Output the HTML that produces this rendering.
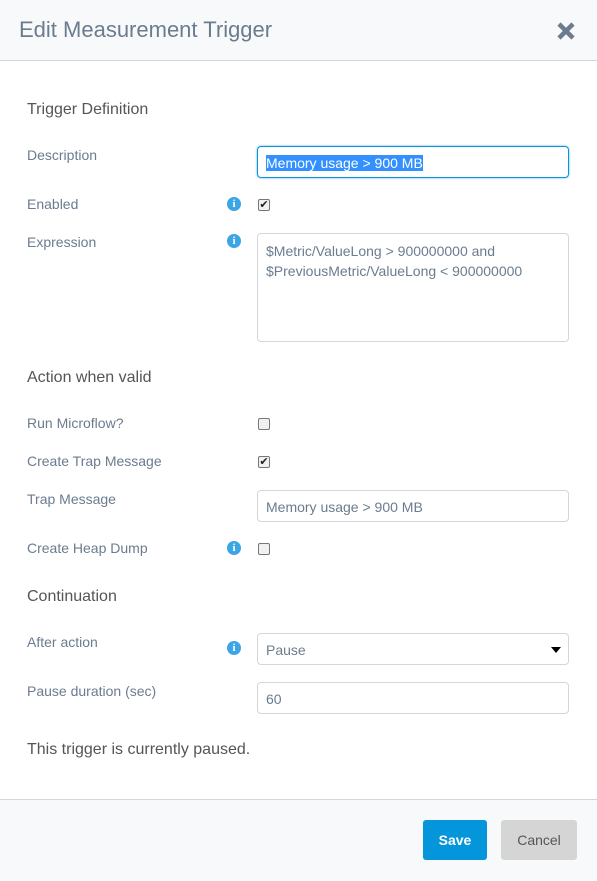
<!DOCTYPE html>
<html><head><style>
*{box-sizing:border-box;margin:0;padding:0}
body{width:597px;height:881px;background:#fff;font-family:"Liberation Sans",Arial,sans-serif;position:relative;overflow:hidden}
.a{position:absolute}
.hdr{left:0;top:0;width:597px;height:61px;background:#f8f9fb;border-bottom:1px solid #d4d6d9}
.title{left:19px;top:17px;font-size:22px;color:#6b7c8f}
.sec{left:27px;font-size:16px;color:#555}
.lbl{left:27px;font-size:14px;color:#6b7c8f}
.inp{left:257px;width:312px;height:32px;border:1px solid #d3d6da;border-radius:4px;font-size:14px;color:#6b7c8f;padding:8px 8px}
.cb{left:258px;width:12px;height:12px;border:1px solid #777;border-radius:2px;background:#f1f1f1;font-size:11px;line-height:10px;text-align:center;color:#222}
.info{left:227px;width:14px;height:14px;border-radius:50%;background:#3ba5e6;color:#fff;font-size:11px;font-weight:bold;text-align:center;line-height:14px;font-family:"Liberation Serif",serif}
.ftr{left:0;top:799px;width:597px;height:82px;background:#f8f9fb;border-top:1px solid #d4d6d9}
</style></head><body>
<div class="a hdr"></div>
<div class="a title">Edit Measurement Trigger</div>
<svg class="a" style="left:556px;top:21px" width="20" height="20" viewBox="0 0 20 20"><path d="M3 3L17 17M17 3L3 17" stroke="#6b7c8f" stroke-width="4.5"/></svg>

<div class="a sec" style="top:101px">Trigger Definition</div>
<div class="a lbl" style="top:147px">Description</div>
<div class="a inp" style="top:146px;border-color:#0595db;box-shadow:0 0 2px #66afe9"><span style="background:#3390ff;color:#fff">Memory usage &gt; 900 MB</span></div>

<div class="a lbl" style="top:196px">Enabled</div>
<div class="a info" style="top:197px">i</div>
<div class="a cb" style="top:199px">✔</div>

<div class="a lbl" style="top:234px">Expression</div>
<div class="a info" style="top:234px">i</div>
<div class="a inp" style="top:233px;height:109px;line-height:20px;padding-top:7px">$Metric/ValueLong &gt; 900000000 and $PreviousMetric/ValueLong &lt; 900000000</div>

<div class="a sec" style="top:369px">Action when valid</div>
<div class="a lbl" style="top:415px">Run Microflow?</div>
<div class="a cb" style="top:418px"></div>
<div class="a lbl" style="top:453px">Create Trap Message</div>
<div class="a cb" style="top:456px">✔</div>
<div class="a lbl" style="top:491px">Trap Message</div>
<div class="a inp" style="top:490px">Memory usage &gt; 900 MB</div>
<div class="a lbl" style="top:540px">Create Heap Dump</div>
<div class="a info" style="top:541px">i</div>
<div class="a cb" style="top:543px"></div>

<div class="a sec" style="top:588px">Continuation</div>
<div class="a lbl" style="top:634px">After action</div>
<div class="a info" style="top:641px">i</div>
<div class="a inp" style="top:633px">Pause</div>
<svg class="a" style="left:551px;top:647px" width="10" height="6"><path d="M0 0H10L5 6Z" fill="#000"/></svg>
<div class="a lbl" style="top:683px">Pause duration (sec)</div>
<div class="a inp" style="top:682px">60</div>

<div class="a" style="left:27px;top:741px;font-size:16px;color:#555">This trigger is currently paused.</div>

<div class="a ftr"></div>
<div class="a" style="left:423px;top:820px;width:64px;height:40px;background:#0595db;border-radius:3px;color:#fff;font-size:14px;font-weight:bold;text-align:center;line-height:40px">Save</div>
<div class="a" style="left:501px;top:820px;width:76px;height:40px;background:#d5d5d5;border-radius:3px;color:#555;font-size:14px;text-align:center;line-height:40px">Cancel</div>
</body></html>
